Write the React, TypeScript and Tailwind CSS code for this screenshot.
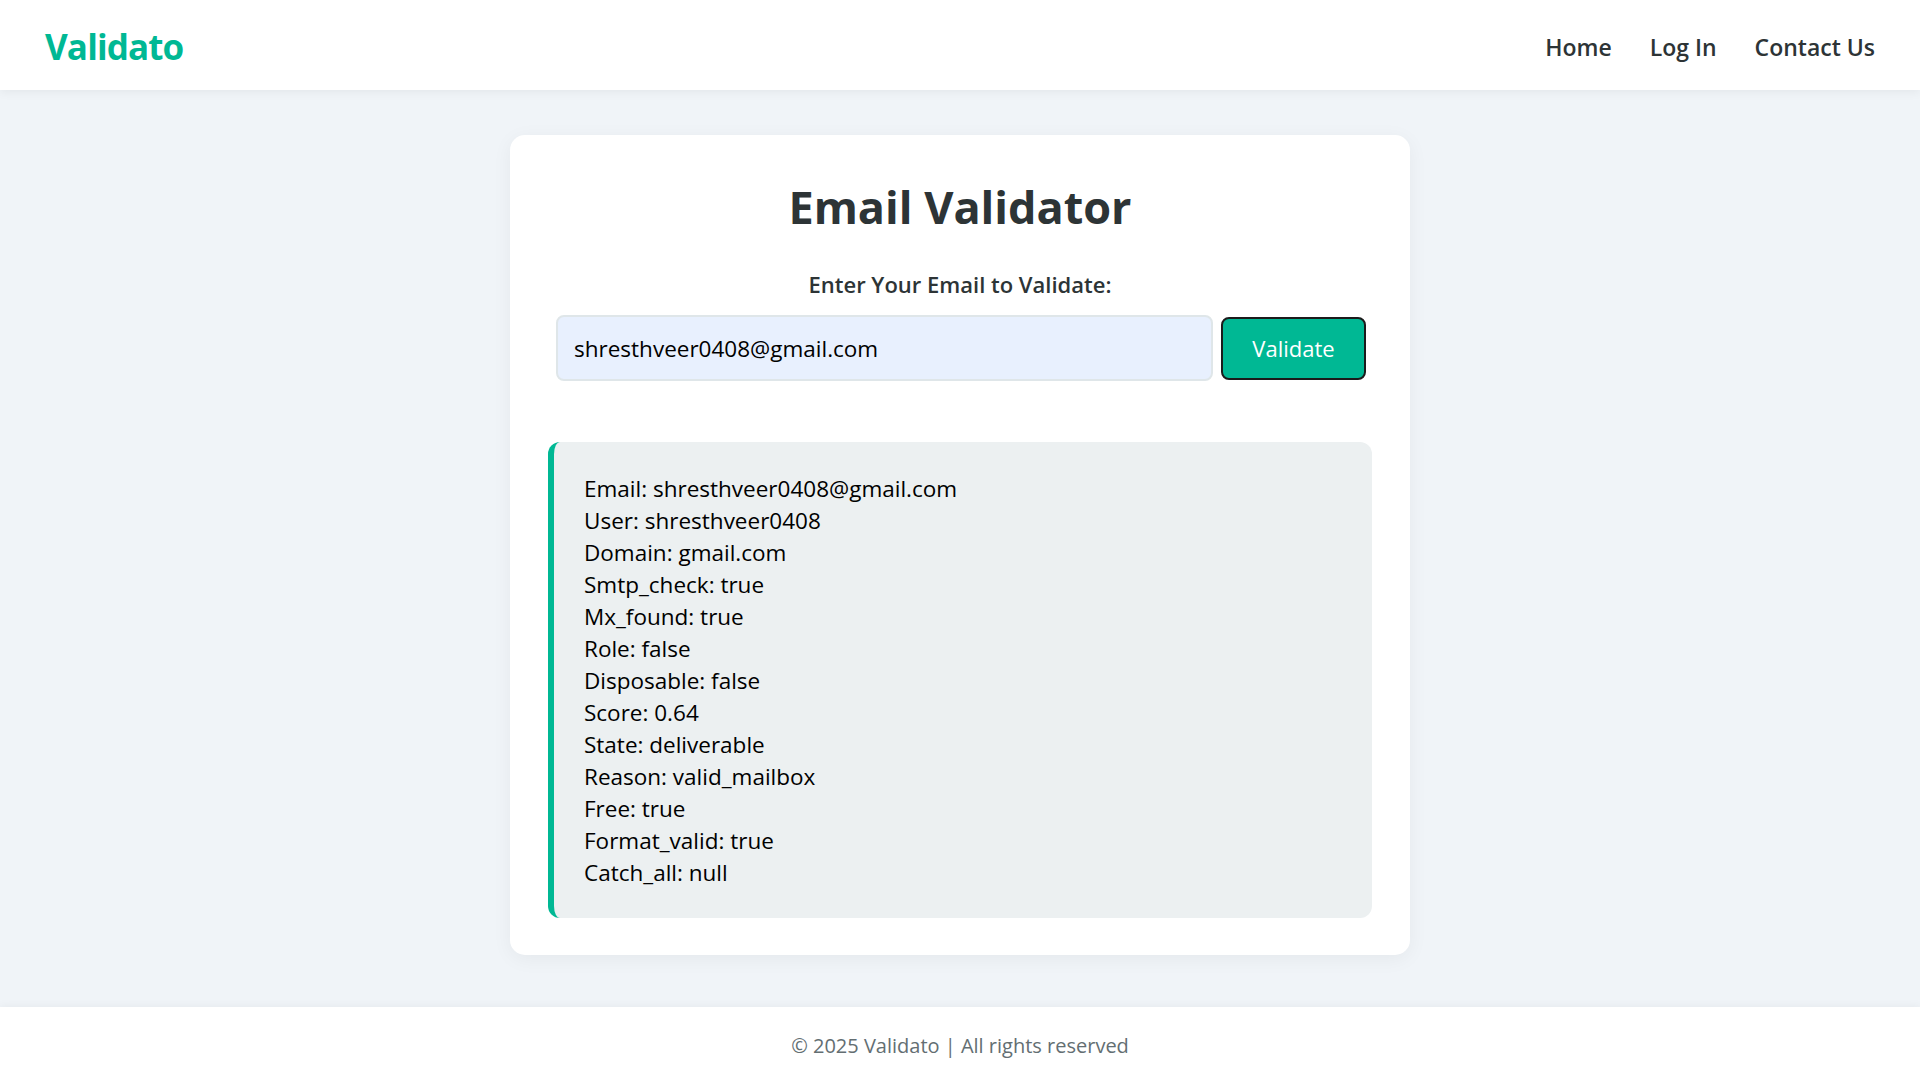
import { useState } from "react";

const result = [
  ["Email", "shresthveer0408@gmail.com"],
  ["User", "shresthveer0408"],
  ["Domain", "gmail.com"],
  ["Smtp_check", "true"],
  ["Mx_found", "true"],
  ["Role", "false"],
  ["Disposable", "false"],
  ["Score", "0.64"],
  ["State", "deliverable"],
  ["Reason", "valid_mailbox"],
  ["Free", "true"],
  ["Format_valid", "true"],
  ["Catch_all", "null"],
];

export default function App() {
  const [email, setEmail] = useState("shresthveer0408@gmail.com");

  return (
    <div className="min-h-screen flex flex-col bg-[#f0f4f8] font-['Open_Sans',sans-serif]">
      <header className="h-[90px] bg-white shadow-[0_2px_10px_rgba(0,0,0,0.06)] flex items-center justify-between px-[45px] pt-[5px] relative z-10">
        <div className="text-[35px] font-bold text-[#00b894] tracking-tight">Validato</div>
        <nav className="flex gap-[38px] text-[23px] font-semibold text-[#2d3436]">
          <a href="#">Home</a>
          <a href="#">Log In</a>
          <a href="#">Contact Us</a>
        </nav>
      </header>

      <main className="flex-1 pt-[45px] pb-[52px]">
        <div className="mx-auto w-[900px] bg-white rounded-[15px] shadow-[0_4px_20px_rgba(0,0,0,0.05)] px-[38px] pt-[40px] pb-[37px]">
          <h1 className="text-center text-[45px] leading-[64px] font-bold text-[#2d3436]">Email Validator</h1>
          <label className="block text-center mt-[31px] text-[22px] leading-[29px] font-semibold text-[#2d3436]">
            Enter Your Email to Validate:
          </label>
          <div className="flex items-center gap-[8px] ml-[8px] mr-[6px] mt-[16px]">
            <input
              value={email}
              onChange={(e) => setEmail(e.target.value)}
              className="flex-1 h-[66px] bg-[#e8f0fe] border-2 border-[#dfe6e9] rounded-[8px] px-[16px] text-[22.5px] text-black outline-none"
            />
            <button className="w-[145px] h-[63px] bg-[#00b894] border-2 border-[#1b1b1b] rounded-[8px] text-white text-[22px]">
              Validate
            </button>
          </div>

          <div className="mt-[61px] bg-[#ecf0f1] border-l-[6px] border-[#00b894] rounded-[12px] pl-[30px] pr-[30px] pt-[31px] pb-[29px] text-[22.5px] leading-[32px] text-black">
            {result.map(([k, v]) => (
              <div key={k}>
                {k}: {v}
              </div>
            ))}
          </div>
        </div>
      </main>

      <footer className="h-[73px] bg-white shadow-[0_-2px_8px_rgba(0,0,0,0.04)] flex items-center justify-center pt-[4px] text-[20px] text-[#636e72]">
        © 2025 Validato | All rights reserved
      </footer>
    </div>
  );
}
